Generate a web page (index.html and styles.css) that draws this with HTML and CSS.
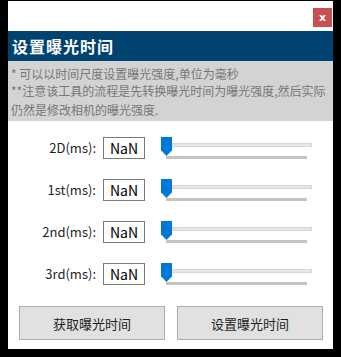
FILE: index.html
```html
<!DOCTYPE html>
<html lang="zh-CN">
<head>
    <meta charset="UTF-8">
    <title>设置曝光时间</title>
    <link rel="stylesheet" href="styles.css">
</head>
<body>

    <div class="window">
        <div class="topbar">
            <button class="close">x</button>
        </div>

        <div class="title">设置曝光时间</div>

        <!-- Notes -->
        <div class="notes">
            <p class="first">* 可以以时间尺度设置曝光强度,单位为毫秒</p>
            <p>**注意该工具的流程是先转换曝光时间为曝光强度,然后实际仍然是修改相机的曝光强度.</p>
        </div>

        <!-- Exposure rows -->
        <div class="rows">
            <div class="row">
                <label>2D(ms):</label>
                <div class="value">NaN</div>
                <div class="slider"><div class="track"></div><div class="ticks"></div><div class="thumb"></div></div>
            </div>
            <div class="row">
                <label>1st(ms):</label>
                <div class="value">NaN</div>
                <div class="slider"><div class="track"></div><div class="ticks"></div><div class="thumb"></div></div>
            </div>
            <div class="row">
                <label>2nd(ms):</label>
                <div class="value">NaN</div>
                <div class="slider"><div class="track"></div><div class="ticks"></div><div class="thumb"></div></div>
            </div>
            <div class="row">
                <label>3rd(ms):</label>
                <div class="value">NaN</div>
                <div class="slider"><div class="track"></div><div class="ticks"></div><div class="thumb"></div></div>
            </div>
        </div>

        <div class="buttons">
            <button class="btn">获取曝光时间</button>
            <button class="btn">设置曝光时间</button>
        </div>
    </div>

</body>
</html>
```

FILE: styles.css
```css
/* Page */
body {
    margin: 0;
    background: #000;
    font-family: "Noto Sans CJK SC", "Noto Sans", sans-serif;
}

.window {
    margin: 1px 8px 0;
    width: 325px;
    height: 348px;
    background: #fff;
    display: flex;
    flex-direction: column;
}

/* Top bar with close button */
.topbar {
    height: 30px;
    display: flex;
    justify-content: flex-end;
    align-items: flex-start;
    padding-top: 7px;
    padding-right: 1px;
    box-sizing: border-box;
}

.close {
    width: 19px;
    height: 19px;
    padding: 0;
    border: none;
    background: #c75050;
    color: #fff;
    font-family: "DejaVu Sans", sans-serif;
    font-size: 11px;
    font-weight: bold;
    line-height: 17px;
}

/* Title */
.title {
    height: 30px;
    line-height: 30px;
    padding-left: 4px;
    background: #004370;
    color: #fff;
    font-size: 16px;
    font-weight: bold;
    letter-spacing: 1px;
}

/* Notes */
.notes {
    height: 60px;
    box-sizing: border-box;
    padding: 5px 3px 0;
    background: #d3d3d3;
    color: #777;
    font-size: 12px;
    line-height: 18.5px;
}

.notes p {
    margin: 0;
}

.notes .first {
    line-height: 16px;
}

/* Rows */
.rows {
    display: flex;
    flex-direction: column;
    gap: 20px;
    margin-top: 16px;
}

.row {
    display: flex;
    align-items: flex-start;
    height: 22px;
}

.row label {
    width: 88px;
    text-align: right;
    font-size: 13px;
    line-height: 22px;
    color: #1e1e1e;
}

.value {
    width: 42px;
    height: 22px;
    box-sizing: border-box;
    margin-left: 7px;
    border: 1px solid #7a7a7a;
    text-align: center;
    font-size: 14px;
    line-height: 20px;
    color: #000;
}

/* Slider */
.slider {
    position: relative;
    width: 151px;
    height: 23px;
    margin-left: 16px;
}

.track {
    position: absolute;
    left: 0;
    right: 0;
    top: 6px;
    height: 4px;
    box-sizing: border-box;
    background: #e7e7e7;
    border: 1px solid #d6d6d6;
}

.ticks {
    position: absolute;
    left: 5px;
    right: 5px;
    top: 19px;
    height: 3px;
    background: #c4c4c4;
}

.thumb {
    position: absolute;
    left: 0;
    top: 0;
    width: 11px;
    height: 19px;
    background: #0078d7;
    clip-path: polygon(0 0, 100% 0, 100% 70%, 50% 100%, 0 70%);
}

/* Buttons */
.buttons {
    display: flex;
    gap: 12px;
    margin-top: 21px;
    padding-left: 11px;
}

.btn {
    width: 146px;
    height: 34px;
    background: #e1e1e1;
    border: 1px solid #adadad;
    font-family: "Noto Sans CJK SC", sans-serif;
    font-size: 13px;
    color: #1e1e1e;
}
```
